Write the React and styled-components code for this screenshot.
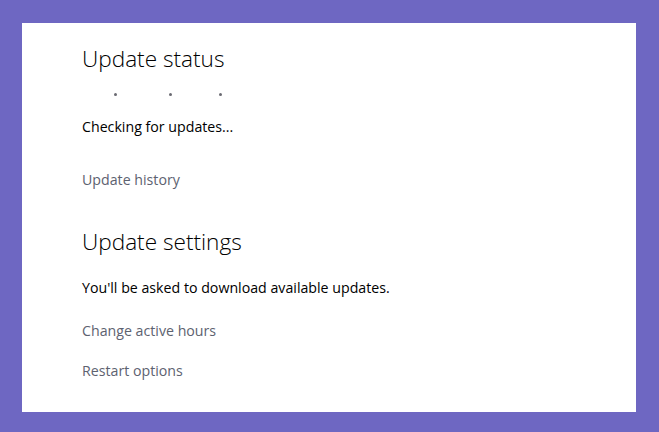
import styled, { createGlobalStyle } from "styled-components";

const Global = createGlobalStyle`
  html, body {
    margin: 0;
    padding: 0;
    background: #6e67c2;
  }
  body {
    font-family: "Open Sans", "Noto Sans", sans-serif;
  }
`;

const Frame = styled.div`
  width: 659px;
  height: 432px;
  box-sizing: border-box;
  padding: 23px 23px 20px 22px;
  background: #6e67c2;
`;

const Panel = styled.div`
  height: 100%;
  background: #ffffff;
  padding: 20px 60px 0 60px;
  box-sizing: border-box;
  display: flex;
  flex-direction: column;
`;

const Heading = styled.h2`
  margin: 0;
  font-size: 22.6px;
  font-weight: 300;
  color: #000;
  line-height: 32px;
  margin-top: ${(p) => p.top || 0}px;
`;

const Dots = styled.div`
  display: flex;
  height: 14px;
  align-items: center;
  padding-left: 32px;
  margin-top: 12px;
`;

const Dot = styled.span`
  width: 3px;
  height: 3px;
  border-radius: 50%;
  background: #6a6a72;
  margin-left: ${(p) => p.gap || 0}px;
`;

const Text = styled.p`
  margin: ${(p) => p.top || 0}px 0 0;
  font-size: 14.2px;
  line-height: 20px;
  color: #000;
`;

const Link = styled.a`
  display: block;
  margin-top: ${(p) => p.top || 0}px;
  font-size: 14.2px;
  line-height: 20px;
  color: #5d6270;
  text-decoration: none;
`;

export default function App() {
  return (
    <Frame>
      <Global />
      <Panel>
        <Heading>Update status</Heading>
        <Dots>
          <Dot />
          <Dot gap={52} />
          <Dot gap={47} />
        </Dots>
        <Text top={16}>Checking for updates...</Text>
        <Link top={33}>Update history</Link>
        <Heading top={36}>Update settings</Heading>
        <Text top={20}>You'll be asked to download available updates.</Text>
        <Link top={23}>Change active hours</Link>
        <Link top={20}>Restart options</Link>
      </Panel>
    </Frame>
  );
}
